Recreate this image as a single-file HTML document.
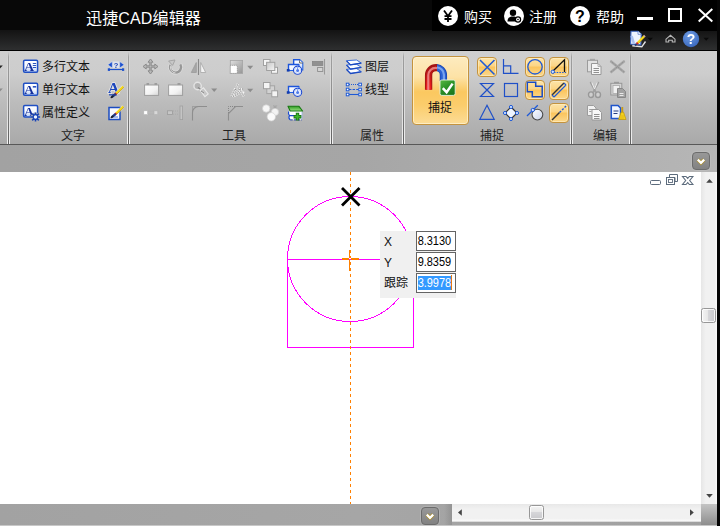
<!DOCTYPE html>
<html><head><meta charset="utf-8">
<style>
html,body{margin:0;padding:0}
body{width:720px;height:526px;overflow:hidden;position:relative;background:#fff;font-family:"Liberation Sans","Noto Sans CJK SC",sans-serif;font-size:12px;color:#111}
.a{position:absolute}
#title{left:0;top:0;width:720px;height:51px;background:linear-gradient(#080808 0,#080808 30.500px,#141414 30.500px,#2e2f30 50px,#000 50px,#000 51px)}
#blk{left:432px;top:0;width:288px;height:31px;background:#000}
#ribbon{left:0;top:51px;width:717px;height:93px;background:linear-gradient(#cfcfcf 0,#cdcdcd 24%,#bcbcbc 55%,#a9a9a9 100%)}
#ribline{left:0;top:144px;width:717px;height:1px;background:#585858}
#bar{left:0;top:145px;width:717px;height:27px;background:linear-gradient(90deg,#a2a2a2,#a6a6a6 50%,#b6b6b6)}
#rb{left:717px;top:0;width:3px;height:526px;background:#050505}
#canvas{left:0;top:172px;width:701px;height:332px;background:#fff}
#vs{left:701px;top:172px;width:16px;height:332px;background:linear-gradient(90deg,#e6e6e6,#f1f1f1 30%,#f1f1f1 85%,#fafafa)}
#bot{left:0;top:504px;width:717px;height:21px;background:linear-gradient(90deg,#a2a2a2,#a6a6a6 50%,#a0a0a0)}
#botl{left:0;top:525px;width:717px;height:1px;background:#c8c8c8}
#hs{left:452px;top:504px;width:249px;height:17px;background:linear-gradient(#e8e8e8,#f1f1f1 30%,#f1f1f1 85%,#fafafa);border-bottom:1px solid #dcdcdc}
.sep{width:1px;top:52px;height:92px;background:linear-gradient(rgba(160,160,160,0) 0,#a0a0a0 5px,#8a8a8a 50%,#606060 100%)}
.sep:after,.sep:before{content:"";position:absolute;left:1px;top:0;width:1px;height:92px;background:linear-gradient(rgba(255,255,255,0) 0,rgba(255,255,255,.15) 8px,rgba(255,255,255,.4) 50%,rgba(255,255,255,.85) 100%)}
.sep:before{left:-1px}
.ob{width:18px;height:18px;border:1px solid #c4933e;border-radius:4px;background:linear-gradient(#fde4a8 0,#fcd585 45%,#fbc45c 50%,#fcd88c 100%);box-shadow:inset 0 0 0 1px rgba(255,240,200,.6)}
.db{width:16px;height:16px;border:1px solid #6c6c6c;border-radius:4px;background:linear-gradient(#989898,#828282);box-shadow:0 0 0 1px rgba(200,200,200,.35)}
.th{width:13px;height:13px;border:1px solid #979797;border-radius:2.500px;box-shadow:inset 0 0 0 1px rgba(255,255,255,.8)}
.ib{left:416px;width:38px;height:18px;border:1px solid #646464;background:#fff;white-space:nowrap;color:#000}
.ib span{position:absolute;left:0.200px;top:2px;width:33px;height:14px;font-size:11px;line-height:12.300px;letter-spacing:-0.050px;transform:scaleY(1.14);transform-origin:0 0;padding-left:0.500px}
.ib .sel{color:#fff}
.ib i{position:absolute;left:1px;top:2px;width:33px;height:14px;background:#3399ff}
.g{will-change:transform}
.t{white-space:nowrap;line-height:16px}
.w{color:#fff}
.gl{top:128px;font-size:12px;color:#222}
</style></head><body>
<div class="a" id="title"></div>
<div class="a" id="blk"></div>
<div class="a" id="ribbon"></div>
<div class="a" id="ribline"></div>
<div class="a" id="bar"></div>
<div class="a" id="canvas"></div>
<div class="a" id="vs"></div>
<div class="a" id="bot"></div>
<div class="a" id="botl"></div>
<div class="a" id="hs"></div>

<!-- canvas drawing -->
<svg class="a" style="left:0;top:172px" width="701" height="332" viewBox="0 172 701 332" shape-rendering="crispEdges">
<g fill="none" stroke="#ff00ff" stroke-width="1"><circle cx="350" cy="259" r="62.5"/><rect x="287.5" y="259.5" width="126" height="88"/></g>
<path d="M350.5 172 V504" stroke="#ff8000" stroke-width="1" stroke-dasharray="3 3"/>
<path d="M342 259 H359" stroke="#ff8000" stroke-width="2"/><path d="M349.500 250 V271" stroke="#ff8000" stroke-width="1"/>
<rect x="349" y="258" width="2" height="1" fill="#fff"/><rect x="349" y="259" width="2" height="1" fill="#ff00ff"/>
</svg>
<svg class="a" style="left:338px;top:184px" width="25" height="25" viewBox="338 184 25 25"><path d="M342 188 L359.500 205.500 M359.500 188 L342 205.500" stroke="#000" stroke-width="2.800"/></svg>
<!-- input panel -->
<div class="a" style="left:380px;top:231px;width:76px;height:67px;background:#f0f0f0"></div>
<div class="a ib" style="top:231px"><span>8.3130</span></div>
<div class="a ib" style="top:252px"><span>9.8359</span></div>
<div class="a ib" style="top:273px"><i></i><span class="sel">3.9978</span></div>
<div class="a" style="left:451px;top:275px;width:1px;height:15px;background:#e87a10"></div>
<div class="a t" style="left:384px;top:234px;font-size:12px">X</div>
<div class="a t" style="left:384px;top:255px;font-size:12px">Y</div>
<div class="a t" style="left:384px;top:275px;font-size:12px">跟踪</div>
<!-- mdi buttons -->
<svg class="a" style="left:648px;top:172px" width="48" height="16" viewBox="648 172 48 16"><g fill="#fff" stroke="#5c6b7c" stroke-width="1"><rect x="650.500" y="180.500" width="10" height="4" rx="1"/><path d="M669.500 174.500 H677.500 V181.500 H675 V177.500 H669.500 Z"/><rect x="666.500" y="177.500" width="8" height="7"/><rect x="668.500" y="179.500" width="4" height="3" stroke-width="0.900"/><path d="M682.500 176.500 H686 L687.700 178.400 L689.400 176.500 H692.900 L689.700 180.500 L692.900 184.500 H689.400 L687.700 182.600 L686 184.500 H682.500 L685.700 180.500 Z" stroke-width="1.100"/></g></svg>
<!-- scrollbars -->
<svg class="a" style="left:705px;top:178px" width="9" height="6" viewBox="0 0 9 6"><path d="M1.200 4.800 L4.500 1 L7.800 4.800 Z" fill="#444"/></svg>
<svg class="a" style="left:705px;top:493px" width="9" height="6" viewBox="0 0 9 6"><path d="M1.200 1 L4.500 4.800 L7.800 1 Z" fill="#444"/></svg>
<svg class="a" style="left:457px;top:508px" width="6" height="9" viewBox="0 0 6 9"><path d="M4.800 1.200 L1 4.500 L4.800 7.800 Z" fill="#444"/></svg>
<svg class="a" style="left:689px;top:508px" width="6" height="9" viewBox="0 0 6 9"><path d="M1 1.200 L4.800 4.500 L1 7.800 Z" fill="#444"/></svg>
<div class="a th" style="left:701px;top:308px;background:linear-gradient(90deg,#f4f4f4,#e6e6e6 49%,#d6d6d9 50%,#c9c9cc)"></div>
<div class="a th" style="left:529px;top:505px;background:linear-gradient(#f4f4f4,#e6e6e6 49%,#d6d6d9 50%,#c9c9cc)"></div>
<div class="a" style="left:701px;top:504px;width:16px;height:21px;background:linear-gradient(#c4c4c4,#8e8e8e)"></div>
<div class="a" style="left:444px;top:504px;width:8px;height:21px;background:linear-gradient(90deg,rgba(140,140,140,0),rgba(140,140,140,.7))"></div>
<!-- dropdown buttons -->
<div class="a db" style="left:692px;top:152px"></div>
<svg class="a" style="left:692px;top:152px" width="18" height="18" viewBox="0 0 18 18"><path d="M5.800 7.600 L9 10.800 L12.200 7.600" fill="none" stroke="#a88c2c" stroke-width="3.800" stroke-linejoin="miter"/><path d="M5.800 7.600 L9 10.800 L12.200 7.600" fill="none" stroke="#fff" stroke-width="2.300"/></svg>
<div class="a db" style="left:421px;top:507px"></div>
<svg class="a" style="left:421px;top:507px" width="18" height="18" viewBox="0 0 18 18"><path d="M5.800 7.600 L9 10.800 L12.200 7.600" fill="none" stroke="#a88c2c" stroke-width="3.800" stroke-linejoin="miter"/><path d="M5.800 7.600 L9 10.800 L12.200 7.600" fill="none" stroke="#fff" stroke-width="2.300"/></svg>
<div class="a" id="rb"></div>

<div class="a t w" style="left:86px;top:9px;font-size:16px;line-height:20px;letter-spacing:0.15px">迅捷CAD编辑器</div>
<div class="a t w" style="left:464px;top:7px;font-size:14px;line-height:20px">购买</div>
<div class="a t w" style="left:529px;top:7px;font-size:14px;line-height:20px">注册</div>
<div class="a t w" style="left:596px;top:7px;font-size:14px;line-height:20px">帮助</div>


<!-- title buttons -->
<svg class="a" style="left:436px;top:4px" width="24" height="24" viewBox="0 0 24 24"><circle cx="12" cy="12" r="10" fill="#fff"/><path d="M8 6.5 L12 12 L16 6.5 M12 12 V18 M8.5 12.2 H15.5 M8.5 15 H15.5" stroke="#000" stroke-width="1.8" fill="none"/></svg>
<svg class="a" style="left:502px;top:4px" width="24" height="24" viewBox="0 0 24 24"><circle cx="12" cy="12" r="10" fill="#fff"/><circle cx="11" cy="8.8" r="3.2" fill="#000"/><path d="M5.5 17.5 C5.5 13.5 8 12.5 11 12.5 C13 12.5 14.5 13 15.5 14 L15.5 17.5 Z" fill="#000"/><circle cx="16" cy="15.5" r="3.2" fill="#000"/><circle cx="16" cy="15.5" r="1.9" fill="#fff"/><circle cx="16" cy="15.5" r="0.8" fill="#000"/></svg>
<svg class="a" style="left:568px;top:4px" width="24" height="24" viewBox="0 0 24 24"><circle cx="12" cy="12" r="10" fill="#fff"/><text x="12" y="17.5" font-family="Liberation Sans,sans-serif" font-weight="bold" font-size="16" text-anchor="middle" fill="#000">?</text></svg>
<div class="a" style="left:637px;top:17px;width:16px;height:3px;background:#fff"></div>
<div class="a" style="left:668px;top:8px;width:10px;height:10px;border:2px solid #fff"></div>
<svg class="a" style="left:696px;top:6px" width="20" height="18" viewBox="0 0 20 18"><path d="M2.7 3 L16.3 15.5 M16.3 3 L2.7 15.5" stroke="#fff" stroke-width="2" fill="none"/></svg>
<!-- quick row -->
<svg class="a g" style="left:629px;top:30px" width="18" height="18" viewBox="0 0 18 18"><path d="M3.300 15.800 L12.800 16.800 L16.500 11.500" stroke="#e4e4e4" stroke-width="1.400" fill="none"/><path d="M2 1.300 H9 L12.300 4.300 L11.800 14.800 L1.500 14 Z" fill="#eef3ff" stroke="#3d66c4" stroke-width="1.100"/><path d="M2.600 6 L5 14" stroke="#a8c0f0" stroke-width="2.500"/><path d="M9 1.300 L9 4.300 H12.300" fill="#fff" stroke="#5a7ccc" stroke-width="0.800"/><path d="M15.200 6.300 L8.600 13" stroke="#f4da18" stroke-width="2.300"/><path d="M15.900 7.200 L9.400 13.800" stroke="#a08010" stroke-width="0.600"/><path d="M8.800 12.800 L7.600 14" stroke="#d01c1c" stroke-width="2.300"/><path d="M7.600 14 L6 15.400" stroke="#283c78" stroke-width="2"/><path d="M15.900 5.600 L15 6.500" stroke="#d8b0b0" stroke-width="2.300"/></svg>
<svg class="a" style="left:647px;top:37px" width="7" height="5" viewBox="0 0 7 5"><path d="M0.5 0.8 H6 L3.2 3.8 Z" fill="#0a0a0a"/></svg>
<svg class="a" style="left:664px;top:33px" width="13" height="11" viewBox="0 0 13 11"><path d="M2 9 V6.2 L6.5 2.3 L11 6.2 V9 H8.3 V7.2 H4.7 V9 Z" fill="#222" stroke="#b8b8b8" stroke-width="1.1" stroke-linejoin="miter"/></svg>
<svg class="a g" style="left:682px;top:30px" width="18" height="18" viewBox="0 0 18 18"><defs><radialGradient id="hg" cx="0.4" cy="0.3" r="0.8"><stop offset="0" stop-color="#6f9ce2"/><stop offset="1" stop-color="#3564bc"/></radialGradient></defs><circle cx="9" cy="9" r="8.2" fill="url(#hg)"/><text x="9" y="14" font-family="Liberation Sans,sans-serif" font-weight="bold" font-size="14" text-anchor="middle" fill="#fff">?</text></svg>
<svg class="a" style="left:703px;top:37px" width="7" height="5" viewBox="0 0 7 5"><path d="M0.5 0.8 H6 L3.2 3.8 Z" fill="#0a0a0a"/></svg>

<!-- text group icons -->
<svg width="0" height="0" class="a"><defs>
<linearGradient id="tb" x1="0" y1="0" x2="0" y2="1"><stop offset="0" stop-color="#fff"/><stop offset="0.55" stop-color="#f4f8ff"/><stop offset="1" stop-color="#b9cdf3"/></linearGradient>
<linearGradient id="og" x1="0" y1="0" x2="0" y2="1"><stop offset="0" stop-color="#fde6b0"/><stop offset="0.45" stop-color="#fcd27a"/><stop offset="0.5" stop-color="#fbc865"/><stop offset="1" stop-color="#fcd98e"/></linearGradient>
<linearGradient id="gg" x1="0" y1="0" x2="1" y2="1"><stop offset="0" stop-color="#e0e0e0"/><stop offset="1" stop-color="#949494"/></linearGradient>
<linearGradient id="wg" x1="0" y1="0" x2="1" y2="1"><stop offset="0" stop-color="#fff"/><stop offset="0.6" stop-color="#f2f2f2"/><stop offset="1" stop-color="#d6d6d6"/></linearGradient>
<linearGradient id="tg" x1="0" y1="0" x2="1" y2="1"><stop offset="0" stop-color="#fff"/><stop offset="1" stop-color="#c8d4ec"/></linearGradient>
<linearGradient id="gg2" x1="0" y1="0" x2="1" y2="1"><stop offset="0" stop-color="#c8c8c8"/><stop offset="1" stop-color="#f4f4f4"/></linearGradient>
</defs></svg>
<svg class="a g" style="left:22px;top:58px" width="19" height="17" viewBox="0 0 19 17"><rect x="1.600" y="2.300" width="14" height="12" rx="1.200" fill="url(#tb)" stroke="#2050c4" stroke-width="1.500"/><text x="2.300" y="13" font-family="Liberation Serif,serif" font-weight="bold" font-size="13.500" fill="#15309c">A</text><path d="M10.800 5.500 H14.200 M10.800 7.500 H14.200 M10.800 9.500 H14.200" stroke="#2a55c0" stroke-width="1"/></svg>
<svg class="a g" style="left:22px;top:81px" width="19" height="17" viewBox="0 0 19 17"><rect x="1.600" y="2.300" width="14" height="12" rx="1.200" fill="url(#tb)" stroke="#2050c4" stroke-width="1.500"/><text x="2.300" y="13" font-family="Liberation Serif,serif" font-weight="bold" font-size="13.500" fill="#15309c">A</text><path d="M10.800 5.800 H14.200" stroke="#2a55c0" stroke-width="1.600"/></svg>
<svg class="a g" style="left:22px;top:104px" width="19" height="18" viewBox="0 0 19 18"><rect x="1.600" y="1.600" width="14" height="11.300" rx="1.200" fill="url(#tb)" stroke="#2050c4" stroke-width="1.500"/><text x="2.300" y="12" font-family="Liberation Serif,serif" font-weight="bold" font-size="13" fill="#15309c">A</text><g transform="translate(13.500,13)"><circle r="4.600" fill="#bcbcbc"/><path d="M0 -4.600 V4.600 M-4.600 0 H4.600 M-3.300 -3.300 L3.300 3.300 M-3.300 3.300 L3.300 -3.300" stroke="#1a44b4" stroke-width="1.700"/><circle r="2.900" fill="#1a44b4"/><circle r="1.700" fill="#eef3ff"/></g></svg>
<svg class="a g" style="left:107px;top:60px" width="18" height="13" viewBox="0 0 18 13"><rect x="5.500" y="1.500" width="7" height="6.500" fill="#e4e8f4" opacity="0.800"/><path d="M0.800 4.800 L5.300 1.600 V8 Z M17.200 4.800 L12.700 1.600 V8 Z" fill="#1c50cc" stroke="#e8ecf8" stroke-width="0.500"/><text x="9" y="7.800" font-family="Liberation Sans,sans-serif" font-weight="bold" font-size="7.500" text-anchor="middle" fill="#1c44b8">?</text><path d="M1.500 9.500 H16.500" stroke="#1c50cc" stroke-width="1.200"/><rect x="0.800" y="8.300" width="2.200" height="2.600" fill="#1c50cc"/><rect x="15" y="8.300" width="2.200" height="2.600" fill="#1c50cc"/></svg>
<svg class="a g" style="left:107px;top:81px" width="18" height="18" viewBox="0 0 18 18"><text x="1" y="12.300" font-family="Liberation Serif,serif" font-weight="bold" font-size="15.500" fill="#fff" stroke="#fff" stroke-width="1.500" opacity="0.600">A</text><text x="1" y="12.300" font-family="Liberation Serif,serif" font-weight="bold" font-size="15.500" fill="#1c46bc">A</text><path d="M2 13.800 H10" stroke="#1c46bc" stroke-width="1.200"/><g transform="translate(0,4.3)"><path d="M16.300 1.200 L9 8.200" stroke="#fff" stroke-width="3.400" opacity="0.500"/><path d="M16.300 1.200 L9 8.200" stroke="#f4d818" stroke-width="2.200"/><path d="M17 2 L9.800 8.900" stroke="#a88410" stroke-width="0.600"/><path d="M9.300 7.900 L8 9.200" stroke="#d81c1c" stroke-width="2.200"/><path d="M8 9.200 L5 11.600" stroke="#1e3c8c" stroke-width="2.300" stroke-linecap="round"/><path d="M5.800 11 L4.300 12.200" stroke="#222" stroke-width="1.600" stroke-linecap="round"/></g></svg>
<svg class="a g" style="left:107px;top:104px" width="18" height="18" viewBox="0 0 18 18"><rect x="2" y="3.500" width="11" height="12" fill="#f6f9ff" stroke="#1c4cc0" stroke-width="1.500"/><path d="M4 13 H11" stroke="#5f86dc" stroke-width="1.100"/><g transform="translate(0,1.3)"><path d="M16.300 1.200 L9 8.200" stroke="#fff" stroke-width="3.400" opacity="0.500"/><path d="M16.300 1.200 L9 8.200" stroke="#f4d818" stroke-width="2.200"/><path d="M17 2 L9.800 8.900" stroke="#a88410" stroke-width="0.600"/><path d="M9.300 7.900 L8 9.200" stroke="#d81c1c" stroke-width="2.200"/><path d="M8 9.200 L5 11.600" stroke="#1e3c8c" stroke-width="2.300" stroke-linecap="round"/><path d="M5.800 11 L4.300 12.200" stroke="#222" stroke-width="1.600" stroke-linecap="round"/></g></svg>
<!-- tools group icons -->
<svg class="a" style="left:142px;top:58px" width="17" height="17" viewBox="0 0 17 17"><path d="M8.5 1 L11 4.2 H9.2 V7.8 H12.8 V6 L16 8.5 L12.8 11 V9.2 H9.2 V12.8 H11 L8.5 16 L6 12.8 H7.8 V9.2 H4.2 V11 L1 8.5 L4.2 6 V7.8 H7.8 V4.2 H6 Z" fill="#b8b8b8" stroke="#8c8c8c" stroke-width="1"/></svg>
<svg class="a g" style="left:166px;top:58px" width="18" height="18" viewBox="0 0 18 18"><path d="M4.500 7 A5.500 5.500 0 1 0 14.300 6.300" fill="none" stroke="#dedede" stroke-width="3.800"/><path d="M4.500 7 A5.500 5.500 0 1 0 14.300 6.300" fill="none" stroke="#989898" stroke-width="2.400"/><path d="M4.800 7.600 A5.500 5.500 0 0 0 9.500 15" fill="none" stroke="#e6e6e6" stroke-width="0.800"/><path d="M2.600 3 L9 2 L6.600 7.400 Z" fill="#c8c8c8" stroke="#a0a0a0" stroke-width="0.900"/></svg>
<svg class="a" style="left:190px;top:58px" width="17" height="18" viewBox="0 0 17 18"><path d="M8.5 1 V17" stroke="#888" stroke-width="1.1"/><path d="M6.3 4.5 V14.5 H1.3 Z" fill="#a8a8a8" stroke="#9a9a9a" stroke-width="0.8"/><path d="M10.7 4.5 V14.5 H15.7 Z" fill="#f4f4f4" stroke="#a6a6a6" stroke-width="0.8"/></svg>

<svg class="a" style="left:143px;top:82px" width="17" height="15" viewBox="0 0 17 15"><rect x="3.5" y="1" width="2.6" height="2.5" fill="#9c9c9c"/><rect x="11.5" y="1" width="2.6" height="2.5" fill="#9c9c9c"/><rect x="1.6" y="3" width="14" height="10.4" fill="url(#wg)" stroke="#9e9e9e" stroke-width="1"/></svg>
<svg class="a" style="left:167px;top:82px" width="17" height="15" viewBox="0 0 17 15"><rect x="10.5" y="1" width="3" height="2.5" fill="#9c9c9c"/><rect x="1.6" y="3" width="14" height="10.4" fill="url(#wg)" stroke="#9e9e9e" stroke-width="1"/></svg>
<svg class="a" style="left:192px;top:81px" width="18" height="18" viewBox="0 0 18 18"><circle cx="5.6" cy="5" r="3.7" fill="#b4b4b4" stroke="#e4e4e4" stroke-width="1.4"/><path d="M6 6.5 L9.5 9" stroke="#888" stroke-width="1.3"/><path d="M8.2 9.2 L11.5 6.8 L16.2 13 L12.9 15.6 Z" fill="#c6c6c6" stroke="#e8e8e8" stroke-width="1.1"/><path d="M9 10 L12 12" stroke="#8a8a8a" stroke-width="1"/></svg>
<svg class="a" style="left:211px;top:88px" width="7" height="5" viewBox="0 0 7 5"><path d="M0.2 0.6 H6.2 L3.2 4 Z" fill="#8c8c8c"/></svg>

<svg class="a" style="left:143px;top:108px" width="17" height="10" viewBox="0 0 17 10"><rect x="0.8" y="2.8" width="3.8" height="3.8" fill="#fff" stroke="#b4b4b4" stroke-width="0.6"/><path d="M5.5 3.2 H10.5 M5.5 6.2 H10.5" stroke="#b0b0b0" stroke-width="0.9" stroke-dasharray="1 1"/><rect x="11" y="2.8" width="3.8" height="3.8" fill="#d8d8d8" stroke="#b0b0b0" stroke-width="0.6"/></svg>
<svg class="a" style="left:166px;top:105px" width="18" height="16" viewBox="0 0 18 16"><rect x="1.4" y="5.8" width="5" height="3.6" fill="#c6c6c6" stroke="#9c9c9c" stroke-width="0.8"/><path d="M7 6 H13 M7 9.2 H13" stroke="#a8a8a8" stroke-width="0.9" stroke-dasharray="1 1"/><rect x="14" y="1" width="2.6" height="13.6" fill="#c4c4c4" stroke="#a0a0a0" stroke-width="0.8"/></svg>
<svg class="a" style="left:191px;top:105px" width="17" height="16" viewBox="0 0 17 16"><path d="M1.500 7.500 V1.500 H7.500" fill="none" stroke="#858585" stroke-width="1" stroke-dasharray="1 1"/><path d="M1.5 15.5 V7.5 A6 6 0 0 1 7.500 1.5 H16" fill="none" stroke="#8e8e8e" stroke-width="1.1"/></svg>
<svg class="a" style="left:227px;top:105px" width="17" height="16" viewBox="0 0 17 16"><path d="M1.500 8 V1.500 H8" fill="none" stroke="#858585" stroke-width="1" stroke-dasharray="1 1"/><path d="M1.5 15.500 V8.500 L8.500 1.500 H16" fill="none" stroke="#8e8e8e" stroke-width="1.100"/></svg>

<!-- tools group icons 2 -->
<svg class="a" style="left:229px;top:59px" width="15" height="16" viewBox="0 0 15 16"><rect x="1.3" y="1.4" width="12.3" height="13" fill="url(#gg)" stroke="#a4a4a4" stroke-width="0.8"/><rect x="1.3" y="6.300" width="7" height="8.100" fill="#fff" stroke="#8a8a8a" stroke-width="1" stroke-dasharray="1 1"/></svg>
<svg class="a" style="left:247px;top:65px" width="7" height="5" viewBox="0 0 7 5"><path d="M0.2 0.8 H6.2 L3.2 4.2 Z" fill="#8c8c8c"/></svg>
<svg class="a g" style="left:230px;top:82px" width="16" height="16" viewBox="0 0 16 16"><path d="M1.500 14.500 L5 7 H13 M5 7 L10 10.800 L3 14.500 M9.500 7 L13.800 14.500 M8 1.500 L6.500 5.500 M11 9 L14 11" fill="none" stroke="#f6f6f6" stroke-width="2.200" stroke-dasharray="1.500 0.800"/><path d="M1.500 14.500 L5 7 H13 M5 7 L10 10.800 L3 14.500 M9.500 7 L13.800 14.500 M8 1.500 L6.500 5.500" fill="none" stroke="#8a8a8a" stroke-width="1" stroke-dasharray="1.200 1"/></svg>
<svg class="a" style="left:247px;top:88px" width="7" height="5" viewBox="0 0 7 5"><path d="M0.2 0.8 H6.2 L3.2 4.2 Z" fill="#8c8c8c"/></svg>

<svg class="a" style="left:262px;top:58px" width="17" height="17" viewBox="0 0 17 17"><rect x="1.500" y="1.500" width="6.500" height="6" fill="#f6f6f6" stroke="#a0a0a0"/><rect x="9.500" y="9.300" width="6" height="6" fill="#f6f6f6" stroke="#a0a0a0"/><rect x="4.600" y="4.300" width="8.200" height="8.200" fill="url(#gg2)" stroke="#a0a0a0"/></svg>
<svg class="a" style="left:262px;top:81px" width="17" height="17" viewBox="0 0 17 17"><rect x="4.800" y="4.800" width="7.800" height="7.800" fill="#d2d2d2" stroke="#a4a4a4"/><rect x="1.500" y="1.500" width="6.500" height="6.200" fill="#f4f4f4" stroke="#a0a0a0"/><rect x="9.800" y="9.800" width="5.800" height="6" fill="#f4f4f4" stroke="#a0a0a0"/></svg>
<svg class="a g" style="left:262px;top:104px" width="17" height="18" viewBox="0 0 17 18"><path d="M11.200 1.200 L15 5 M15 1.200 L11.200 5 M13 1 V5 M11 3 H15" stroke="#a4a4a4" stroke-width="0.800"/><circle cx="4.200" cy="4.500" r="3.700" fill="#f6f6f6" stroke="#d0d0d0" stroke-width="0.700"/><circle cx="13" cy="8" r="3.600" fill="#f2f2f2" stroke="#d0d0d0" stroke-width="0.700"/><circle cx="9.300" cy="12.800" r="4.200" fill="#fafafa" stroke="#d0d0d0" stroke-width="0.700"/></svg>

<svg class="a g" style="left:286px;top:58px" width="18" height="18" viewBox="0 0 18 18"><defs><linearGradient id="bl" x1="0" y1="0" x2="1" y2="1"><stop offset="0" stop-color="#fff"/><stop offset="0.500" stop-color="#f0f5ff"/><stop offset="1" stop-color="#b4ccf8"/></linearGradient></defs><path d="M7.600 1.700 H14 L16.800 4.500 V12 H7.600 Z" fill="url(#bl)" stroke="#2464e4" stroke-width="1.100"/><path d="M7.600 12 V1.700 H14" fill="none" stroke="#1c55dc" stroke-width="1.300"/><path d="M13.600 2.200 V5 H16.800" fill="#fff" stroke="#444" stroke-width="0.800"/><rect x="2.500" y="6.500" width="10.500" height="6" fill="url(#bl)" stroke="#2464e4" stroke-width="1"/><path d="M2.500 12.500 V6.500 H13" fill="none" stroke="#1c55dc" stroke-width="1.400"/><rect x="0.800" y="11" width="2.800" height="2.600" fill="#123cb0"/><circle cx="11.600" cy="12.200" r="4.100" fill="#f4f7ff" stroke="#1c48d0" stroke-width="1.100"/><circle cx="11.600" cy="12.200" r="3" fill="none" stroke="#c4d6fa" stroke-width="1"/><circle cx="11.600" cy="12.500" r="1.500" fill="#4a78e8"/><path d="M11.600 9.300 V12.400" stroke="#5a84ea" stroke-width="0.900"/></svg>
<svg class="a g" style="left:286px;top:84px" width="18" height="14" viewBox="0 0 18 14"><rect x="2.500" y="2.500" width="10.500" height="6" fill="url(#bl)" stroke="#2464e4" stroke-width="1"/><path d="M2.500 8.500 V2.500 H13" fill="none" stroke="#1c55dc" stroke-width="1.400"/><rect x="0.800" y="7.200" width="2.800" height="2.600" fill="#123cb0"/><circle cx="11.600" cy="8.300" r="4.100" fill="#f4f7ff" stroke="#1c48d0" stroke-width="1.100"/><circle cx="11.600" cy="8.300" r="3" fill="none" stroke="#c4d6fa" stroke-width="1"/><circle cx="11.600" cy="8.600" r="1.500" fill="#4a78e8"/><path d="M11.600 5.400 V8.500" stroke="#5a84ea" stroke-width="0.900"/></svg>
<svg class="a g" style="left:286px;top:105px" width="18" height="17" viewBox="0 0 18 17"><defs><linearGradient id="gr" x1="0" y1="0" x2="0" y2="1"><stop offset="0" stop-color="#2f9c22"/><stop offset="1" stop-color="#9be084"/></linearGradient></defs><path d="M2.500 6 H16 V14.800 H4 C2.800 13.500 2.500 12 3.400 10.800 C2.400 9.500 2.300 7.500 2.500 6 Z" fill="#fbfcff"/><path d="M2.600 6.500 C2.200 8 2.500 9.600 3.600 10.600 H9 M3.400 10.800 C2.600 12.200 3 13.800 4.200 14.800" fill="none" stroke="#1c4cd0" stroke-width="1.200"/><path d="M4.200 14.900 H16" stroke="#1c3cb0" stroke-width="1" stroke-dasharray="2.500 1.200"/><path d="M16 7 V14" stroke="#9ab4ec" stroke-width="0.800"/><path d="M2 1.300 H13 L16.600 6 H4.200 Z" fill="url(#gr)" stroke="#1a7a14" stroke-width="1.100" stroke-linejoin="round"/><path d="M7.600 11.700 H15.400 M11.500 7.800 V15.600" stroke="#156c12" stroke-width="3.400"/><path d="M8.400 11.700 H14.600 M11.500 8.600 V14.800" stroke="#3cb82c" stroke-width="1.800"/></svg>

<svg class="a" style="left:311px;top:58px" width="16" height="18" viewBox="0 0 16 18"><rect x="1.400" y="3.500" width="10.400" height="4" fill="#909090" stroke="#858585" stroke-width="0.8"/><rect x="6.600" y="9.500" width="5.200" height="4" fill="#d4d4d4" stroke="#8e8e8e" stroke-width="0.9"/><path d="M13.800 1 V16.600" stroke="#888" stroke-width="1.100"/><path d="M14.800 1 V16.600" stroke="#e0e0e0" stroke-width="0.800"/></svg>

<!-- props group icons -->
<svg class="a g" style="left:345px;top:59px" width="18" height="16" viewBox="0 0 18 16"><g fill="#fafcff" stroke="#2a62d8" stroke-width="0.900" stroke-linejoin="round"><path d="M1.500 10.300 L11.500 9.600 L16.300 12.600 L5.500 14.300 Z"/><path d="M1.500 6 L11.500 5.300 L16.300 8.300 L5.500 10 Z"/><path d="M1.500 1.700 L11.500 1 L16.300 4 L5.500 5.700 Z"/></g><path d="M1.500 10.500 L5.500 14.500 L16.300 12.800 M1.500 6.200 L5.500 10.200 L16.300 8.500 M1.500 1.900 L5.500 5.900 L16.300 4.200" fill="none" stroke="#1a48c0" stroke-width="1.200"/></svg>
<svg class="a g" style="left:345px;top:82px" width="18" height="15" viewBox="0 0 18 15"><g stroke="#1f5ad6" stroke-width="1.100" fill="none"><path d="M4 2.500 H14" stroke-dasharray="1 1"/><path d="M4 7.500 H14" stroke-dasharray="2.400 1.200"/><path d="M4 12.500 H14"/></g><g fill="#fff" stroke="#1f5ad6" stroke-width="1"><rect x="1.300" y="1.200" width="2.600" height="2.600"/><rect x="13.800" y="1.200" width="2.600" height="2.600"/><rect x="1.300" y="6.200" width="2.600" height="2.600"/><rect x="13.800" y="6.200" width="2.600" height="2.600"/><rect x="1.300" y="11.200" width="2.600" height="2.600"/><rect x="13.800" y="11.200" width="2.600" height="2.600"/></g></svg>

<!-- capture group -->
<div class="a" style="left:412px;top:56px;width:55px;height:67px;border:1px solid #c4933e;border-radius:4px;background:linear-gradient(#fdebbf 0,#fde2a6 30%,#fbd27a 44%,#fbc860 52%,#fbcd6c 72%,#fcdc96 100%);box-shadow:inset 0 0 0 1px rgba(255,245,215,.7)"></div>
<svg class="a g" style="left:423px;top:62px" width="34" height="35" viewBox="0 0 34 35"><defs>
<clipPath id="cr"><rect x="0" y="0" width="13.900" height="35"/></clipPath><clipPath id="cb"><rect x="13.900" y="0" width="20" height="35"/></clipPath>
<linearGradient id="ck" x1="0" y1="0" x2="0.600" y2="1"><stop offset="0" stop-color="#58b844"/><stop offset="0.500" stop-color="#2e9428"/><stop offset="1" stop-color="#1c7a1e"/></linearGradient>
<linearGradient id="rl" x1="0" y1="0" x2="0" y2="1"><stop offset="0" stop-color="#a81414"/><stop offset="0.450" stop-color="#cc1818"/><stop offset="1" stop-color="#f42020"/></linearGradient></defs>
<g fill="none" clip-path="url(#cr)"><path d="M5.600 27.700 V13 A7.400 7.400 0 0 1 20.400 13 V19" stroke="#a01212" stroke-width="7.300"/><path d="M5.600 27.700 V13 A7.400 7.400 0 0 1 20.400 13 V19" stroke="url(#rl)" stroke-width="5.600"/><path d="M5.600 27.700 V13 A7.400 7.400 0 0 1 20.400 13 V19" stroke="#f08c8c" stroke-width="2.200" opacity="0.850" transform="translate(-0.300,0.300)"/></g>
<g fill="none" clip-path="url(#cb)"><path d="M5.600 27.700 V13 A7.400 7.400 0 0 1 20.400 13 V19" stroke="#1c48b0" stroke-width="7.300"/><path d="M5.600 27.700 V13 A7.400 7.400 0 0 1 20.400 13 V19" stroke="#2c62d4" stroke-width="5.600"/><path d="M5.600 27.700 V13 A7.400 7.400 0 0 1 20.400 13 V19" stroke="#86aef0" stroke-width="2.200" opacity="0.850" transform="translate(0.500,-0.300)"/></g>
<rect x="17" y="18" width="15.200" height="15.400" rx="1.800" fill="url(#ck)" stroke="#e4f2dc" stroke-width="0.900"/>
<path d="M19.800 26.200 L23.600 30.300 L29.600 21.600" fill="none" stroke="#fff" stroke-width="2.500"/></svg>
<div class="a t" style="left:428px;top:100px;font-size:12px">捕捉</div>
<div class="a ob" style="left:477px;top:57px"></div>
<div class="a ob" style="left:525px;top:57px"></div>
<div class="a ob" style="left:549px;top:57px"></div>
<div class="a ob" style="left:525px;top:80px"></div>
<div class="a ob" style="left:549px;top:80px"></div>
<div class="a ob" style="left:549px;top:103px"></div>

<svg class="a" style="left:477px;top:57px" width="20" height="20" viewBox="0 0 20 20"><path d="M3 3 L17.500 17.500 M17.500 3 L3 17.500" stroke="#1f5ad6" stroke-width="1.500"/></svg>
<svg class="a" style="left:501px;top:57px" width="20" height="20" viewBox="0 0 20 20"><path d="M2.500 2 V16.300 H17.500 M2.500 8.800 H9.700 V16.300" fill="none" stroke="#1f50c8" stroke-width="1.200"/></svg>
<svg class="a" style="left:525px;top:57px" width="20" height="20" viewBox="0 0 20 20"><circle cx="10" cy="9.800" r="7.200" fill="none" stroke="#1f5ad6" stroke-width="1.300"/></svg>
<svg class="a" style="left:549px;top:57px" width="20" height="20" viewBox="0 0 20 20"><path d="M4 14 L15.500 2.800 V15" fill="none" stroke="#111" stroke-width="1.300"/><path d="M5 15.500 H17" stroke="#1f5ad6" stroke-width="1.200" stroke-dasharray="1.500 1.200"/><circle cx="3.800" cy="14.800" r="1.700" fill="#cfe0ff" stroke="#1f5ad6" stroke-width="1"/></svg>

<svg class="a" style="left:477px;top:80px" width="20" height="20" viewBox="0 0 20 20"><path d="M3.500 3.500 H16.500 L3.500 16.500 H16.500 Z" fill="none" stroke="#1f50c8" stroke-width="1.200" stroke-linejoin="miter"/></svg>
<svg class="a" style="left:501px;top:80px" width="20" height="20" viewBox="0 0 20 20"><rect x="3.500" y="3.500" width="13" height="13" fill="none" stroke="#1f50c8" stroke-width="1.200"/></svg>
<svg class="a" style="left:525px;top:80px" width="20" height="20" viewBox="0 0 20 20"><path d="M2.300 2.200 H10.700 V6.300 H17.200 V16.700 H7.300 V11.700 H2.300 Z" fill="none" stroke="#1a4cc4" stroke-width="1.500"/></svg>
<svg class="a" style="left:549px;top:80px" width="20" height="20" viewBox="0 0 20 20"><path d="M3 15 L15 3" stroke="#333" stroke-width="1.400"/><path d="M5 17 L17 5 M3 15 L5 17 M15 3 L17 5" stroke="#1f5ad6" stroke-width="1.100" fill="none"/></svg>

<svg class="a" style="left:477px;top:103px" width="20" height="20" viewBox="0 0 20 20"><path d="M10 2.300 L17.200 16.300 H2.800 Z" fill="none" stroke="#1f50c8" stroke-width="1.200"/></svg>
<svg class="a" style="left:501px;top:103px" width="20" height="20" viewBox="0 0 20 20"><path d="M10 4 L16 10 L10 16 L4 10 Z" fill="#eef4ff" stroke="#333" stroke-width="1.200"/><g fill="#cfe0ff" stroke="#1f5ad6" stroke-width="1"><circle cx="10" cy="4" r="1.600"/><circle cx="16" cy="10" r="1.600"/><circle cx="10" cy="16" r="1.600"/><circle cx="4" cy="10" r="1.600"/></g></svg>
<svg class="a" style="left:525px;top:103px" width="20" height="20" viewBox="0 0 20 20"><circle cx="12.400" cy="11.600" r="5.400" fill="url(#tg)" stroke="#4a4a4a" stroke-width="1.100"/><path d="M2 13 L12.800 2.200" stroke="#1f5ad6" stroke-width="1.300"/><circle cx="7.800" cy="7" r="1.700" fill="#cfe0ff" stroke="#1f5ad6" stroke-width="1"/></svg>
<svg class="a" style="left:549px;top:103px" width="20" height="20" viewBox="0 0 20 20"><path d="M3 17 L10.500 9.500" stroke="#333" stroke-width="1.500"/><path d="M10.500 9.500 L17 3" stroke="#1f5ad6" stroke-width="1.400" stroke-dasharray="2.200 1.400"/></svg>

<!-- edit group -->
<svg class="a g" style="left:586px;top:58px" width="17" height="18" viewBox="0 0 17 18"><rect x="4" y="0.800" width="5" height="2.800" fill="#a8a8a8"/><rect x="1.500" y="2.300" width="10" height="11.500" fill="#e2e2e2" stroke="#9c9c9c" stroke-width="1"/><path d="M5.500 5.500 H12 L15 8.500 V16.500 H5.500 Z" fill="#f6f6f6" stroke="#989898" stroke-width="1"/><path d="M12 5.500 V8.500 H15" fill="none" stroke="#a4a4a4" stroke-width="0.800"/><path d="M7.500 10.500 H13 M7.500 12.500 H13 M7.500 14.500 H13" stroke="#909090" stroke-width="1"/></svg>
<svg class="a g" style="left:609px;top:59px" width="17" height="15" viewBox="0 0 17 15"><path d="M1.500 2 L15.500 13.500 M15.500 2 L1.500 13.500" stroke="#a8a8a8" stroke-width="2.600"/><path d="M1.500 2 L15.500 13.500 M15.500 2 L1.500 13.500" stroke="#8a8a8a" stroke-width="1" stroke-dasharray="1 1"/></svg>
<svg class="a g" style="left:587px;top:81px" width="15" height="18" viewBox="0 0 15 18"><path d="M3.300 1 L9 11.500 M11.700 1 L6 11.500" stroke="#a0a0a0" stroke-width="1.600" fill="none"/><path d="M4.800 1.500 L7.500 8 L10.200 1.500" stroke="#ececec" stroke-width="1" fill="none"/><ellipse cx="4" cy="13.700" rx="2.500" ry="2.800" fill="#cfcfcf" stroke="#989898" stroke-width="1.400"/><ellipse cx="11" cy="13.700" rx="2.500" ry="2.800" fill="#cfcfcf" stroke="#989898" stroke-width="1.400"/></svg>
<svg class="a g" style="left:609px;top:81px" width="18" height="18" viewBox="0 0 18 18"><rect x="5" y="0.800" width="5" height="2.800" fill="#9c9c9c"/><rect x="1.800" y="2.300" width="11" height="11.700" fill="#d4d4d4" stroke="#969696" stroke-width="1"/><rect x="4" y="4.500" width="6.500" height="8" fill="#f0f0f0" stroke="#a8a8a8" stroke-width="0.800"/><path d="M8.500 7.500 H13.500 L16.500 10.500 V16.500 H8.500 Z" fill="#a2a2a2" stroke="#888" stroke-width="1"/><path d="M10.500 12.500 H14.500 M10.500 14.500 H14.500" stroke="#e8e8e8" stroke-width="1"/></svg>
<svg class="a g" style="left:586px;top:104px" width="17" height="17" viewBox="0 0 17 17"><path d="M1.500 1.500 H7.500 L10 4 V11.500 H1.500 Z" fill="#f2f2f2" stroke="#9c9c9c" stroke-width="1"/><path d="M3.200 5.500 H8 M3.200 7.500 H5.500" stroke="#a0a0a0" stroke-width="1"/><path d="M6 5.500 H12.500 L15.500 8.500 V16 H6 Z" fill="#f8f8f8" stroke="#989898" stroke-width="1"/><path d="M8 10.500 H13.500 M8 12.500 H13.500 M8 14.500 H13.500" stroke="#909090" stroke-width="1"/></svg>
<svg class="a g" style="left:609px;top:104px" width="18" height="17" viewBox="0 0 18 17"><path d="M2.300 1.500 H9 L11.500 4 V14.500 H2.300 Z" fill="#f2f7ff" stroke="#1f55cc" stroke-width="1.500"/><path d="M4.500 7 H9.500 M4.500 9.500 H8.500" stroke="#243c80" stroke-width="1.100"/><path d="M13.300 3 V8.500" stroke="#c89a14" stroke-width="1.800"/><path d="M12 8.300 H14.600 L17 15.500 H9.600 Z" fill="#f4d21c" stroke="#c49a10" stroke-width="0.800"/><path d="M12 11 V15 M14 11 V15" stroke="#d8b018" stroke-width="0.700"/></svg>
<svg class="a" style="left:0;top:65px" width="4" height="4" viewBox="0 0 4 4"><path d="M-3 0.500 H2.800 L0 3.500 Z" fill="#222"/></svg>
<svg class="a" style="left:0;top:88px" width="4" height="4" viewBox="0 0 4 4"><path d="M-3 0.500 H2.800 L0 3.500 Z" fill="#8a8a8a"/></svg>
<div class="a sep" style="left:8px"></div>
<div class="a sep" style="left:128px"></div>
<div class="a sep" style="left:331px"></div>
<div class="a sep" style="left:403px"></div>
<div class="a sep" style="left:571px"></div>
<div class="a sep" style="left:630px"></div>

<div class="a t" style="left:42px;top:59px">多行文本</div>
<div class="a t" style="left:42px;top:82px">单行文本</div>
<div class="a t" style="left:42px;top:105px">属性定义</div>
<div class="a t" style="left:365px;top:59px">图层</div>
<div class="a t" style="left:365px;top:82px">线型</div>

<div class="a t gl" style="left:61px">文字</div>
<div class="a t gl" style="left:222px">工具</div>
<div class="a t gl" style="left:360px">属性</div>
<div class="a t gl" style="left:480px">捕捉</div>
<div class="a t gl" style="left:593px">编辑</div>
</body></html>
